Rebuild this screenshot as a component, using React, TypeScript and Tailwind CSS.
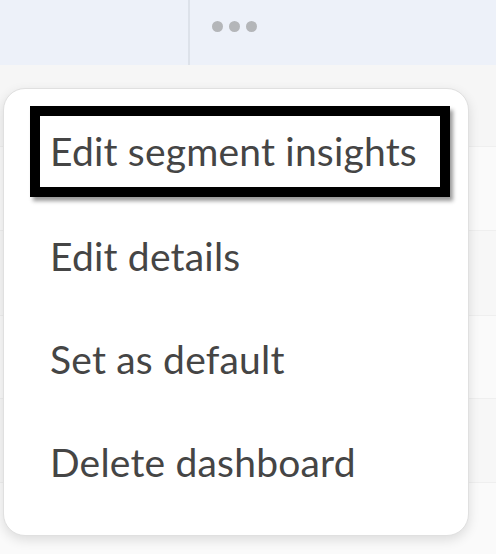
import React from 'react';

const items = ['Edit details', 'Set as default', 'Delete dashboard'];

export default function App() {
  return (
    <div className="relative w-[496px] h-[554px] overflow-hidden bg-[#f7f7f7] font-['Lato','Noto_Sans',sans-serif]">
      {/* header strip */}
      <div className="flex h-[65px] bg-[#edf1f9]">
        <div className="w-[190px] border-r-2 border-[#dde2ea]" />
        <div className="flex gap-[6px] pl-[22px] pt-[21px]">
          <span className="w-[11px] h-[11px] rounded-full bg-[#b4b6b9]" />
          <span className="w-[11px] h-[11px] rounded-full bg-[#b4b6b9]" />
          <span className="w-[11px] h-[11px] rounded-full bg-[#b4b6b9]" />
        </div>
      </div>

      {/* table rows behind the menu */}
      <div className="flex flex-col">
        <div className="h-[81px] bg-[#f6f6f6]" />
        <div className="h-[84px] bg-[#fafafa] border-t border-[#efefef]" />
        <div className="h-[85px] bg-[#f7f7f7] border-t border-[#efefef]" />
        <div className="h-[83px] bg-[#fafafa] border-t border-[#efefef]" />
        <div className="h-[84px] bg-[#f7f7f7] border-t border-[#efefef]" />
        <div className="h-[72px] bg-[#fafafa] border-t border-[#efefef]" />
      </div>

      {/* dropdown menu */}
      <div className="absolute left-[3px] top-[88px] w-[466px] h-[448px] rounded-[22px] bg-white border border-[#e0e0e0] shadow-[0_4px_12px_rgba(0,0,0,0.12)] pt-[17px]">
        <div className="ml-[26px] w-[420px] h-[91px] box-border border-[10px] border-black bg-white shadow-[3px_4px_4px_rgba(0,0,0,0.4)] flex items-center pl-[10px]">
          <span className="text-[39px] leading-none text-[#454545] tracking-[0.2px]">Edit segment insights</span>
        </div>
        <div className="flex flex-col pt-[8px]">
          {items.map((label) => (
            <div key={label} className="h-[103px] flex items-center pl-[46px]">
              <span className="text-[39px] leading-none text-[#454545] tracking-[0.2px]">{label}</span>
            </div>
          ))}
        </div>
      </div>
    </div>
  );
}
